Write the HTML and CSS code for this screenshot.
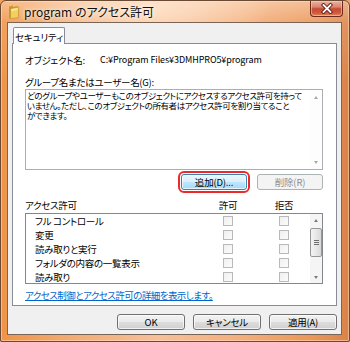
FILE: index.html
```html
<!DOCTYPE html>
<html lang="ja">
<head>
<meta charset="utf-8">
<title>program のアクセス許可</title>
<link rel="stylesheet" href="styles.css">
</head>
<body>
<div class="window">
  <div class="titlebar">
    <svg class="ficon" width="11" height="14" viewBox="0 0 11 14">
      <path d="M1 1.5 L5 0.5 L5 2 L9.5 1 L9.5 12 L1 13.5 Z" fill="#c99a2c"/>
      <path d="M2.5 3.5 L10.5 2 L10.5 12.5 L2.5 13.8 Z" fill="#f3cf5f" stroke="#b8892a" stroke-width="0.6"/>
      <path d="M3.2 4.2 L9.8 3 L9.8 5 L3.2 6.2 Z" fill="#fbe79a"/>
    </svg>
    <span class="title">program のアクセス許可</span>
    <div class="close">
      <svg width="14" height="11" viewBox="0 0 14 11">
        <path d="M3.5 2 L10.5 9 M10.5 2 L3.5 9" stroke="#5b1d12" stroke-width="3.6" stroke-linecap="square"/>
        <path d="M3.5 2 L10.5 9 M10.5 2 L3.5 9" stroke="#ffffff" stroke-width="1.8" stroke-linecap="square"/>
      </svg>
    </div>
  </div>
  <div class="client">
    <div class="tabs"><div class="tab">セキュリティ</div></div>
    <div class="panel">
      <div class="objrow"><span class="objlabel">オブジェクト名:</span><span class="objpath">C:¥Program Files¥3DMHPRO5¥program</span></div>
      <div class="label">グループ名またはユーザー名(G):</div>
      <div class="textbox">
        <div class="tbtext">どのグループやユーザーもこのオブジェクトにアクセスするアクセス許可を持って<br>いません。ただし、このオブジェクトの所有者はアクセス許可を割り当てること<br>ができます。</div>
        <div class="vscroll vscroll-off">
          <div class="sbtn"><span class="arr up"></span></div>
          <div class="strack"></div>
          <div class="sbtn"><span class="arr down"></span></div>
        </div>
      </div>
      <div class="btnrow">
        <button class="btn btn-hl">追加(D)...</button>
        <button class="btn btn-dis">削除(R)</button>
      </div>
      <div class="permhead">
        <span class="phlabel">アクセス許可</span>
        <span class="phcol"><span>許可</span></span>
        <span class="phcol"><span>拒否</span></span>
      </div>
      <div class="listbox">
        <div class="rows">
          <div class="row"><span class="rname">フル コントロール</span><span class="cb"></span><span class="cb"></span></div>
          <div class="row"><span class="rname">変更</span><span class="cb"></span><span class="cb"></span></div>
          <div class="row"><span class="rname">読み取りと実行</span><span class="cb"></span><span class="cb"></span></div>
          <div class="row"><span class="rname">フォルダの内容の一覧表示</span><span class="cb"></span><span class="cb"></span></div>
          <div class="row"><span class="rname">読み取り</span><span class="cb"></span><span class="cb"></span></div>
        </div>
        <div class="vscroll">
          <div class="sbtn sbtn-s"><span class="arr up"></span></div>
          <div class="strack">
            <div class="thumb"><span class="grip"></span><span class="grip"></span><span class="grip"></span></div>
          </div>
          <div class="sbtn sbtn-s"><span class="arr down"></span></div>
        </div>
      </div>
      <a class="link" href="#">アクセス制御とアクセス許可の詳細を表示します。</a>
    </div>
    <div class="footer">
      <button class="btn">OK</button>
      <button class="btn">キャンセル</button>
      <button class="btn">適用(A)</button>
    </div>
  </div>
</div>
</body>
</html>
```

FILE: styles.css
```css
* { box-sizing: border-box; }
html, body { margin: 0; padding: 0; }
body {
  width: 350px;
  height: 342px;
  overflow: hidden;
  font-family: "Noto Sans CJK JP", "Noto Sans", sans-serif;
  font-size: 9.5px;
  font-feature-settings: "palt";
  letter-spacing: -0.3px;
  color: #000;
  background: #f0a060;
}
.window {
  width: 350px;
  height: 342px;
  display: flex;
  flex-direction: column;
  border: 1px solid #6b4a33;
  border-radius: 6px 6px 2px 2px;
  background:
    linear-gradient(180deg, rgba(255,240,225,0.45) 0px, rgba(255,235,215,0.15) 21px, rgba(0,0,0,0) 80px),
    radial-gradient(ellipse 120px 40px at 150px 8px, rgba(255,230,205,0.7), rgba(255,230,205,0) 100%),
    linear-gradient(90deg, #ef9448 0%, #f3ab74 20%, #f6c09a 45%, #f3ad7a 70%, #ea9658 90%, #d9834a 100%);
  box-shadow: inset 0 0 0 1px rgba(255,230,200,0.5);
}
.titlebar {
  height: 21px;
  display: flex;
  align-items: center;
  padding-left: 7px;
  flex: none;
}
.ficon { flex: none; margin-top: 1px; }
.title {
  margin-left: 5px;
  font-size: 12px;
  letter-spacing: 0;
  line-height: 14px;
  color: #111;
  text-shadow: 0 0 6px #fff5ea, 0 0 3px #fff5ea;
  margin-top: 1px;
}
.close {
  margin-left: auto;
  margin-right: 6px;
  align-self: flex-start;
  width: 33px;
  height: 16px;
  border: 1px solid #6a2b1c;
  border-top: none;
  border-radius: 0 0 4px 4px;
  background: linear-gradient(180deg, #eab3a4 0%, #dc8470 40%, #c74a33 52%, #cf5b3b 80%, #e08a5a 100%);
  box-shadow: inset 0 0 0 1px rgba(255,210,190,0.55);
  display: flex;
  align-items: center;
  justify-content: center;
}
.client {
  flex: 1;
  margin: 0 7px 6px 6px;
  background: #f0f0f0;
  border: 1px solid #7a6455;
  display: flex;
  flex-direction: column;
}
.tabs {
  display: flex;
  padding-left: 5px;
  margin-top: 4px;
  position: relative;
  z-index: 1;
  margin-bottom: -1px;
}
.tab {
  width: 52px;
  height: 17px;
  background: #fff;
  border: 1px solid #898c95;
  border-bottom: none;
  border-radius: 2px 2px 0 0;
  display: flex;
  align-items: center;
  justify-content: center;
  font-size: 9.5px;
  letter-spacing: -0.2px;
  white-space: nowrap;
  padding-top: 1px;
}
.panel {
  width: 325px;
  height: 263px;
  margin-left: 4px;
  background: #fff;
  border: 1px solid #898c95;
  padding: 0 13px 0 12px;
  display: flex;
  flex-direction: column;
}
.objrow {
  margin-top: 10px;
  height: 12px;
  line-height: 12px;
  display: flex;
  white-space: nowrap;
}
.objlabel { width: 75px; flex: none; }
.objpath { font-size: 9px; letter-spacing: -0.1px; }
.label {
  margin-top: 10px;
  height: 12px;
  line-height: 12px;
  white-space: nowrap;
}
.textbox {
  margin-top: 1px;
  height: 81px;
  border: 1px solid #abadb3;
  display: flex;
  flex: none;
}
.tbtext {
  flex: 1;
  padding: 0 0 0 1px;
  line-height: 10px;
  font-size: 8.5px;
  letter-spacing: -0.4px;
  white-space: nowrap;
  overflow: hidden;
}
.vscroll {
  width: 12px;
  flex: none;
  display: flex;
  flex-direction: column;
  background: #f5f5f5;
}
.vscroll-off { background: #fdfdfd; }
.sbtn {
  height: 14px;
  display: flex;
  align-items: center;
  justify-content: center;
  flex: none;
}
.sbtn-s { height: 12px; }
.strack { flex: 1; }
.arr {
  width: 0;
  height: 0;
  border-left: 2.5px solid transparent;
  border-right: 2.5px solid transparent;
}
.arr.up { border-bottom: 3px solid #7c7c7c; }
.arr.down { border-top: 3px solid #7c7c7c; }
.vscroll-off .arr.up { border-bottom-color: #a8a8a8; }
.vscroll-off .arr.down { border-top-color: #a8a8a8; }
.thumb {
  margin: 2px 0 0 0;
  height: 29px;
  border: 1px solid #979797;
  border-radius: 2px;
  background: linear-gradient(90deg, #f3f3f3 0%, #e8e8e8 50%, #d9d9d9 100%);
  display: flex;
  flex-direction: column;
  align-items: center;
  justify-content: center;
  gap: 1px;
}
.grip {
  width: 5px;
  height: 1px;
  background: #6f6f6f;
}
.btnrow {
  margin-top: 4px;
  display: flex;
  justify-content: flex-end;
  gap: 10px;
}
.btn {
  width: 66px;
  height: 16px;
  padding: 0;
  font-family: inherit;
  font-size: 9.5px;
  letter-spacing: -0.2px;
  font-feature-settings: "palt";
  line-height: 14px;
  color: #000;
  border: 1px solid #707070;
  border-radius: 3px;
  background: linear-gradient(180deg, #f2f2f2 0%, #ebebeb 48%, #dddddd 52%, #cfcfcf 100%);
  box-shadow: inset 0 0 0 1px rgba(255,255,255,0.7);
}
.btn-hl {
  border-color: #3c7fb1;
  background: linear-gradient(180deg, #eaf6fd 0%, #d9f0fc 48%, #bee6fd 52%, #a7d9f5 100%);
  outline: 2px solid #ec2a2a;
  outline-offset: 1px;
}
.btn-dis {
  border-color: #adb2b5;
  background: #f4f4f4;
  color: #8d8d8d;
  box-shadow: none;
}
.permhead {
  margin-top: 9px;
  height: 12px;
  line-height: 12px;
  display: grid;
  grid-template-columns: 198px 56px 20px;
  white-space: nowrap;
}
.phcol {
  width: 10px;
  display: flex;
  justify-content: center;
}
.listbox {
  margin-top: 2px;
  height: 71px;
  border: 1px solid #828790;
  display: flex;
  flex: none;
}
.rows {
  flex: 1;
  overflow: hidden;
}
.row {
  height: 14px;
  display: grid;
  grid-template-columns: 197px 56px 20px;
  align-items: center;
  white-space: nowrap;
}
.rname { padding-left: 9px; line-height: 14px; }
.cb {
  width: 10px;
  height: 10px;
  border: 1px solid #b9b9b9;
  background: linear-gradient(135deg, #f0f0f0, #fbfbfb);
}
.link {
  margin-top: 5px;
  line-height: 12px;
  height: 12px;
  color: #0066cc;
  letter-spacing: -0.55px;
  text-decoration: underline;
  white-space: nowrap;
  align-self: flex-start;
}
.footer {
  margin-top: 8px;
  display: flex;
  justify-content: flex-end;
  gap: 8px;
  padding-right: 4px;
}
.footer .btn { width: 68px; }
```
